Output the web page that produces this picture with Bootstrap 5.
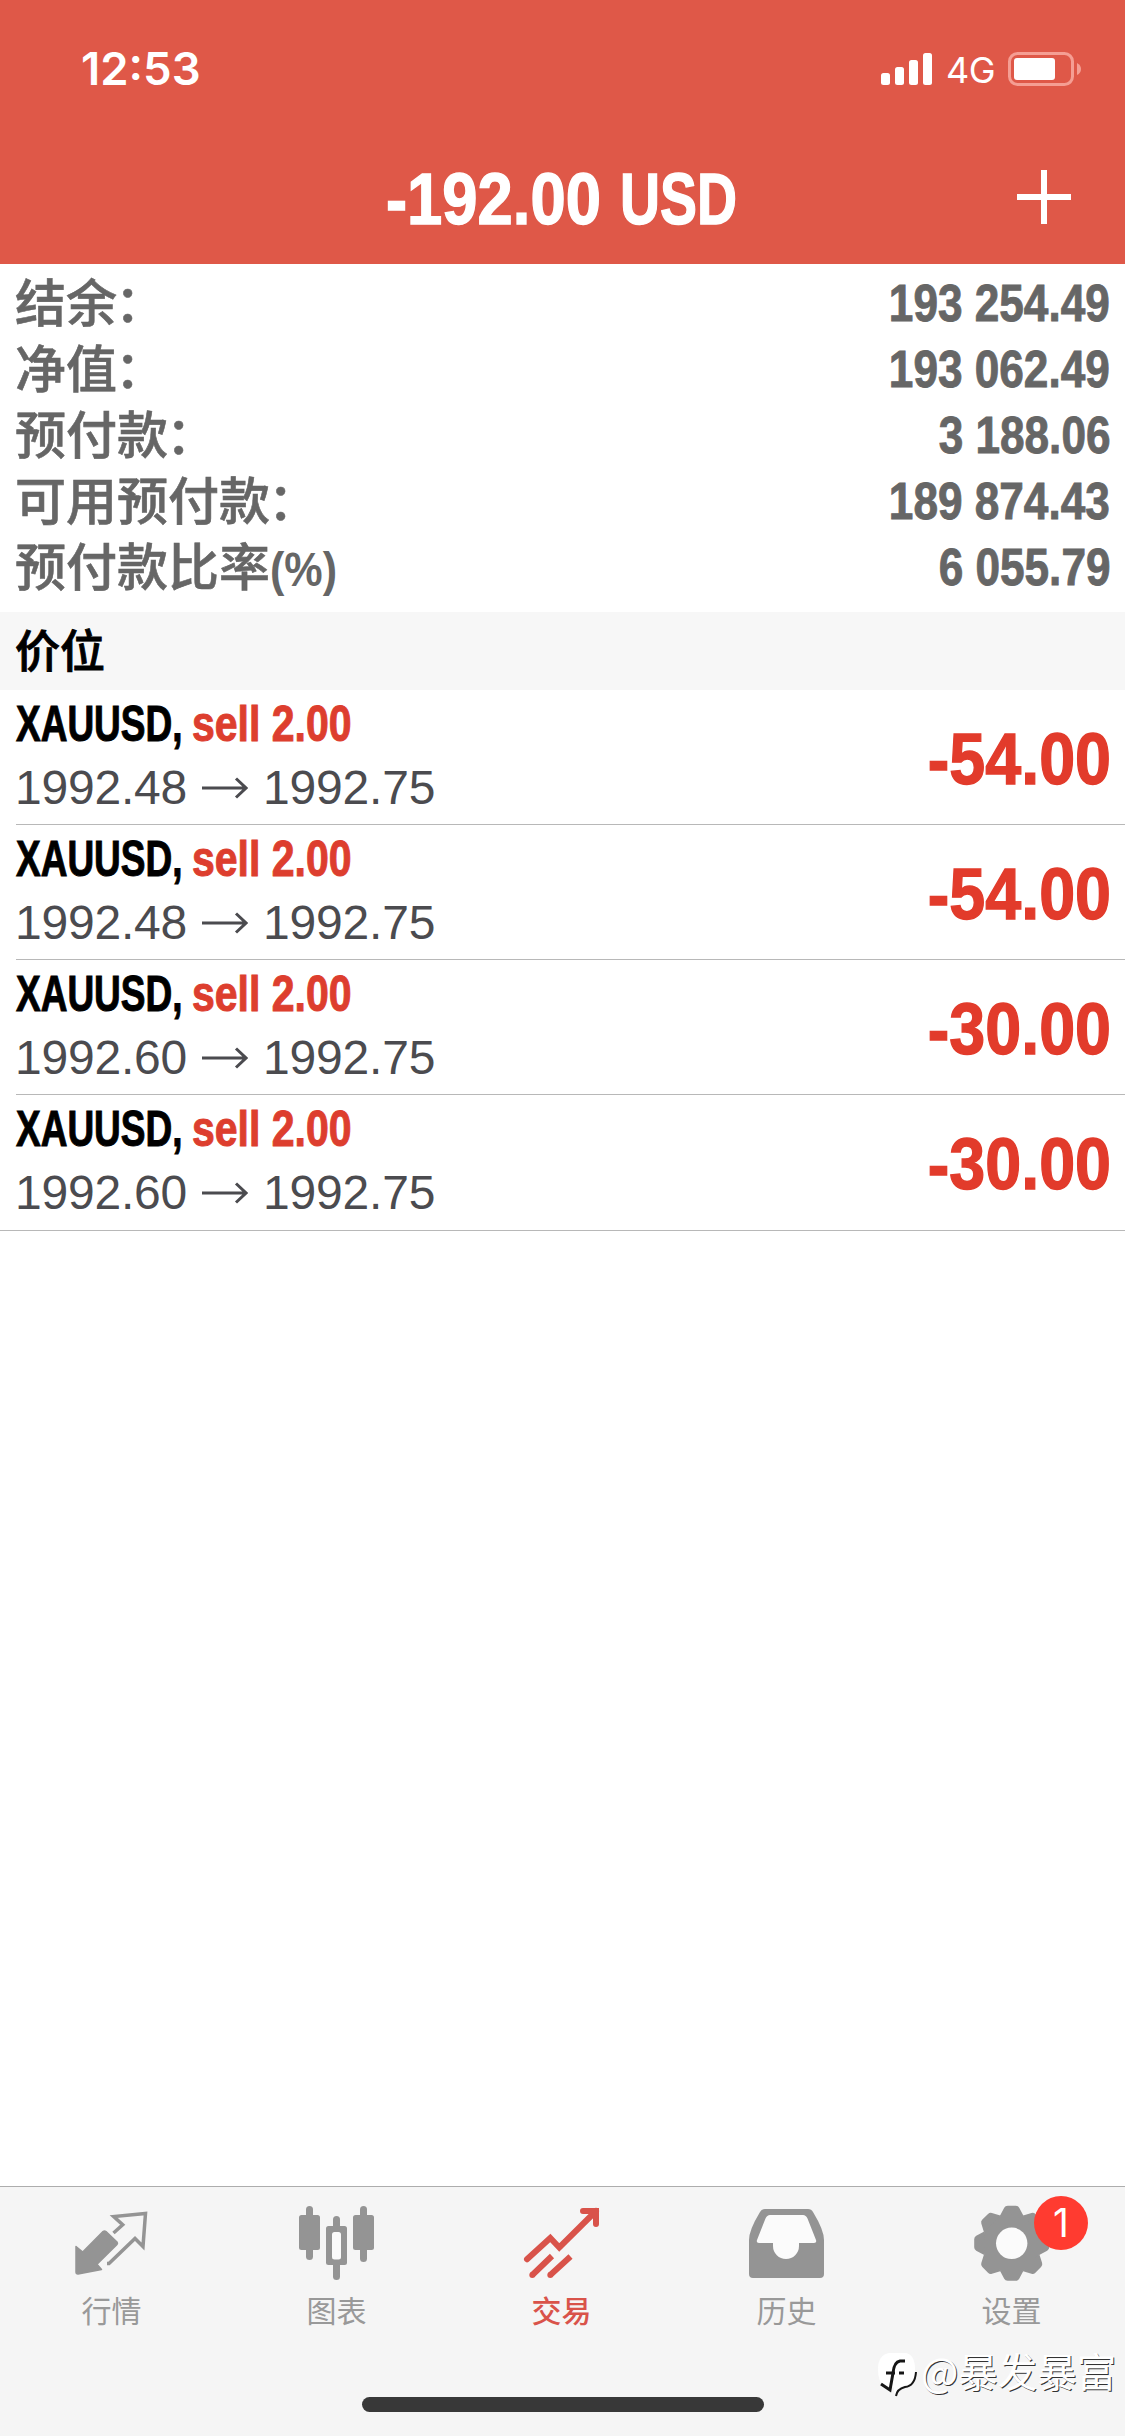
<!DOCTYPE html>
<html lang="zh-CN">
<head>
<meta charset="utf-8">
<meta name="viewport" content="width=device-width, initial-scale=1">
<title>交易</title>
<link href="https://cdn.jsdelivr.net/npm/bootstrap@5.3.0/dist/css/bootstrap.min.css" rel="stylesheet">
<style>
  body { width: 1125px; height: 2436px; overflow: hidden; background: #fff; font-family: "Liberation Sans", "Noto Sans CJK SC", sans-serif; color: #000; }
  .app { height: 2436px; }
  svg { display: block; flex: none; }
  .cjk { font-family: "Noto Sans CJK SC", sans-serif; }
  .narrow { display: inline-block; transform-origin: left center; white-space: nowrap; }
  .top-bar { height: 264px; background: #df5848; color: #fff; }
  .status { height: 138px; padding: 0 43px 0 81px; font-family: Inter, sans-serif; }
  .clock { font-size: 45.5px; font-weight: 600; line-height: 138px; letter-spacing: 0; }
  .net { font-size: 36px; line-height: 138px; width: 47px; margin: 1px 15px 0 13px; letter-spacing: -.6px; }
  .title-row { height: 126px; padding-left: 386px; padding-right: 54px; }
  .title { font-size: 72px; font-weight: 700; line-height: 122px; -webkit-text-stroke: 1.4px currentColor; }
  .title .amt { transform: scaleX(.88); width: 234px; }
  .title .cur { transform: scaleX(.77); }
  .plus { margin-top: 32px; }
  .summary { padding: 6px 16px 12px 15px; color: #666; }
  .sum-row { height: 66px; }
  .sum-label { font-size: 51px; font-weight: 500; line-height: 60px; -webkit-text-stroke: .6px currentColor; }
  .sum-label .narrow { font-family: "Liberation Sans", sans-serif; font-weight: 700; font-size: 49px; transform: scaleX(.88); -webkit-text-stroke: 0; }
  .sum-value { font-size: 51.5px; font-weight: 700; line-height: 67px; transform: scaleX(.857); transform-origin: right center; margin-right: -1px; -webkit-text-stroke: .9px currentColor; }
  .colon { margin-left: -2px; }
  .section { height: 78px; background: #f7f7f7; padding-left: 15px; font-size: 45px; font-weight: 500; line-height: 73px; -webkit-text-stroke: .9px currentColor; }
  .pos { margin-left: 16px; height: 135px; padding-right: 16px; border-bottom: 1px solid #b8b8b8; }
  .pos:last-child { margin-left: 0; padding-left: 16px; height: 136px; }
  .pos-name { font-size: 50px; font-weight: 700; line-height: 69px; height: 68px; margin-left: -.5px; -webkit-text-stroke: 1px currentColor; }
  .pos-name .sym { transform: scaleX(.74); width: 176px; }
  .pos-name .side { transform: scaleX(.82); color: #dd3e2e; }
  .pos-price { font-size: 48px; line-height: 60px; color: #4b4b4f; margin-left: -1px; letter-spacing: -.2px; }
  .pos-price svg { margin: 0 15px 0 15px; }
  .pos-pl { font-size: 73px; font-weight: 700; line-height: 138px; color: #e23b2b; transform: scaleX(.885); transform-origin: right center; margin-right: -2px; height: 134px; -webkit-text-stroke: 1.4px currentColor; }
  .tabs { height: 250px; background: #f5f5f5; border-top: 1px solid #adadad; color: #999; }
  .tab { width: 225px; padding-top: 13px; }
  .tab-label { font-size: 30px; line-height: 40px; margin-top: 9px; padding-right: 2px; }
  .tab.on { color: #d9534a; }
  .tab.on .tab-label { font-weight: 500; }
  .count { left: 134px; top: 9px; width: 54px; height: 54px; background: #ff3b30; color: #fff; font: 400 39px/54px Inter, sans-serif; text-align: center; }
  .home { width: 402px; height: 15px; background: #383838; margin: 68px auto 0; }
  .stamp { left: 877px; top: 2344px; color: #fff; font-size: 39.5px; line-height: 52px; text-shadow: 1px 1px 0 #333; }
  .stamp span { margin-top: -5px; }
</style>
<script src="https://cdn.jsdelivr.net/npm/bootstrap@5.3.0/dist/js/bootstrap.bundle.min.js"></script>
</head>
<body>
<div class="app d-flex flex-column position-relative">
  <header class="top-bar">
    <div class="status d-flex justify-content-between align-items-start">
      <div class="clock">12:53</div>
      <div class="d-flex align-items-start">
        <svg width="52" height="90" viewBox="0 0 52 90" fill="#fff"><rect y="73" width="9" height="12" rx="2.5"/><rect x="14" y="67" width="9" height="18" rx="2.5"/><rect x="28" y="60" width="9" height="25" rx="2.5"/><rect x="42" y="53" width="9" height="32" rx="2.5"/></svg>
        <div class="net">4G</div>
        <svg width="74" height="90" viewBox="0 0 74 90"><rect x="1.5" y="53.5" width="63" height="31" rx="8" fill="none" stroke="#f59e93" stroke-width="3"/><rect x="6" y="58" width="41" height="22" rx="3" fill="#fff"/><path d="M69 63q4 2 4 6t-4 6z" fill="#f59e93"/></svg>
      </div>
    </div>
    <div class="title-row d-flex justify-content-between align-items-start">
      <div class="title d-flex"><span class="narrow amt">-192.00</span><span class="narrow cur">USD</span></div>
      <svg class="plus" width="54" height="54" viewBox="0 0 54 54" fill="#fff"><path d="M24 0h6v24h24v6H30v24h-6V30H0v-6h24z"/></svg>
    </div>
  </header>

  <section class="summary">
    <div class="sum-row d-flex justify-content-between"><div class="sum-label cjk">结余<span class="colon">：</span></div><div class="sum-value">193 254.49</div></div>
    <div class="sum-row d-flex justify-content-between"><div class="sum-label cjk">净值<span class="colon">：</span></div><div class="sum-value">193 062.49</div></div>
    <div class="sum-row d-flex justify-content-between"><div class="sum-label cjk">预付款<span class="colon">：</span></div><div class="sum-value">3 188.06</div></div>
    <div class="sum-row d-flex justify-content-between"><div class="sum-label cjk">可用预付款<span class="colon">：</span></div><div class="sum-value">189 874.43</div></div>
    <div class="sum-row d-flex justify-content-between"><div class="sum-label cjk">预付款比率<span class="narrow">(%)</span></div><div class="sum-value">6 055.79</div></div>
  </section>

  <div class="section cjk">价位</div>

  <section class="flex-grow-1">
    <div class="pos d-flex justify-content-between">
      <div><div class="pos-name d-flex"><span class="narrow sym">XAUUSD,</span><span class="narrow side">sell 2.00</span></div>
      <div class="pos-price d-flex align-items-center">1992.48<svg width="46" height="22" viewBox="0 0 46 22" fill="none" stroke="currentColor" stroke-width="3"><path d="M0 11h44M34 1.5l10 9.5-10 9.5"/></svg>1992.75</div></div>
      <div class="pos-pl">-54.00</div>
    </div>
    <div class="pos d-flex justify-content-between">
      <div><div class="pos-name d-flex"><span class="narrow sym">XAUUSD,</span><span class="narrow side">sell 2.00</span></div>
      <div class="pos-price d-flex align-items-center">1992.48<svg width="46" height="22" viewBox="0 0 46 22" fill="none" stroke="currentColor" stroke-width="3"><path d="M0 11h44M34 1.5l10 9.5-10 9.5"/></svg>1992.75</div></div>
      <div class="pos-pl">-54.00</div>
    </div>
    <div class="pos d-flex justify-content-between">
      <div><div class="pos-name d-flex"><span class="narrow sym">XAUUSD,</span><span class="narrow side">sell 2.00</span></div>
      <div class="pos-price d-flex align-items-center">1992.60<svg width="46" height="22" viewBox="0 0 46 22" fill="none" stroke="currentColor" stroke-width="3"><path d="M0 11h44M34 1.5l10 9.5-10 9.5"/></svg>1992.75</div></div>
      <div class="pos-pl">-30.00</div>
    </div>
    <div class="pos d-flex justify-content-between">
      <div><div class="pos-name d-flex"><span class="narrow sym">XAUUSD,</span><span class="narrow side">sell 2.00</span></div>
      <div class="pos-price d-flex align-items-center">1992.60<svg width="46" height="22" viewBox="0 0 46 22" fill="none" stroke="currentColor" stroke-width="3"><path d="M0 11h44M34 1.5l10 9.5-10 9.5"/></svg>1992.75</div></div>
      <div class="pos-pl">-30.00</div>
    </div>
  </section>

  <nav class="tabs">
    <div class="d-flex">
      <div class="tab d-flex flex-column align-items-center">
        <svg width="81" height="80" viewBox="0 0 81 80"><path fill="#949494" stroke="#949494" stroke-width="1.5" stroke-linejoin="round" d="M4 46.5l6.7 5.5L31 31.5q1.500-1.200 3 0L45 42q1 1.300 0 2.500L25 64.300l4.500 5.200L6 74q-2 0-2-2z"/><path fill="none" stroke="#949494" stroke-width="3.500" d="M41.500 33l9.200-8.200-9-8.300 31.800-3L71 46.500l-8-8L37 63.500h-2"/></svg>
        <div class="tab-label cjk">行情</div>
      </div>
      <div class="tab d-flex flex-column align-items-center">
        <svg width="81" height="80" viewBox="0 0 81 80" fill="#949494"><rect x="9" y="6" width="7" height="54" rx="3.500"/><rect x="2" y="15" width="21" height="35" rx="2.500"/><rect x="36" y="16" width="7" height="64" rx="3.500"/><rect x="29" y="26" width="21" height="39" rx="2.500"/><rect x="35" y="32" width="9" height="27.500" rx="2.500" fill="#fbfbfb"/><rect x="63" y="6" width="7" height="56" rx="3.500"/><rect x="56" y="15" width="21" height="35" rx="2.500"/></svg>
        <div class="tab-label cjk">图表</div>
      </div>
      <div class="tab on d-flex flex-column align-items-center">
        <svg width="81" height="80" viewBox="0 0 81 80" fill="none" stroke="#d9534a" stroke-width="6"><path stroke-linecap="round" d="M5 59.300L28.300 38l9 9.500L74 11M61 11h13v13"/><path d="M10.300 75L30 56M28.300 75L48.500 56.500"/><g fill="#d9534a" stroke="none"><circle cx="10.300" cy="75" r="3"/><circle cx="28.300" cy="75" r="3"/></g></svg>
        <div class="tab-label cjk">交易</div>
      </div>
      <div class="tab d-flex flex-column align-items-center">
        <svg width="81" height="80" viewBox="0 0 81 80"><path fill="#949494" d="M18 9H61q3.500 0 5 3Q77 30 77 40V74q0 4-4 4H6q-4 0-4-4V40Q2 30 13 12q1.500-3 5-3z"/><path fill="#fbfbfb" d="M23 15q-3 0-4.500 3.500L10 40q-1 3 2 3H26V46a13 13 0 0 0 26 0V43H67q3 0 2-3L60.500 18.500Q59 15 56 15z"/></svg>
        <div class="tab-label cjk">历史</div>
      </div>
      <div class="tab position-relative d-flex flex-column align-items-center">
        <svg width="81" height="80" viewBox="0 0 81 80" overflow="visible"><defs><path id="tooth" d="M-12-27L-7.500-35.500Q-6.500-37.500-4-37.500H4Q6.500-37.500 7.500-35.500L12-27z"/></defs><g transform="translate(39.700 43.300)" fill="#949494"><circle r="29.500"/><use href="#tooth"/><use href="#tooth" transform="rotate(45)"/><use href="#tooth" transform="rotate(90)"/><use href="#tooth" transform="rotate(135)"/><use href="#tooth" transform="rotate(180)"/><use href="#tooth" transform="rotate(225)"/><use href="#tooth" transform="rotate(270)"/><use href="#tooth" transform="rotate(315)"/><circle r="15.700" fill="#fbfbfb"/></g></svg>
        <div class="tab-label cjk">设置</div>
        <div class="count position-absolute rounded-circle">1</div>
      </div>
    </div>
    <div class="home rounded-pill"></div>
  </nav>

  <div class="stamp cjk position-absolute d-flex align-items-center">
    <svg width="44" height="56" viewBox="0 0 44 56"><path fill="#fff" d="M12 9h17q9 2 9 16 0 14-9 16.500-9 1-11 9-1 0-1-7l-10-2Q1 38 1 25 1 11 12 9z"/><path fill="none" stroke="#161616" stroke-width="3" d="M28 17h-5q-6 1-7 12l-3 17-9-6M9 29h9M22 29h5"/><path fill="none" stroke="#161616" stroke-width="2" d="M19 52q1-7 9-9 10-1 11-15"/></svg>
    <span>@暴发暴富</span>
  </div>
</div>
</body>
</html>
